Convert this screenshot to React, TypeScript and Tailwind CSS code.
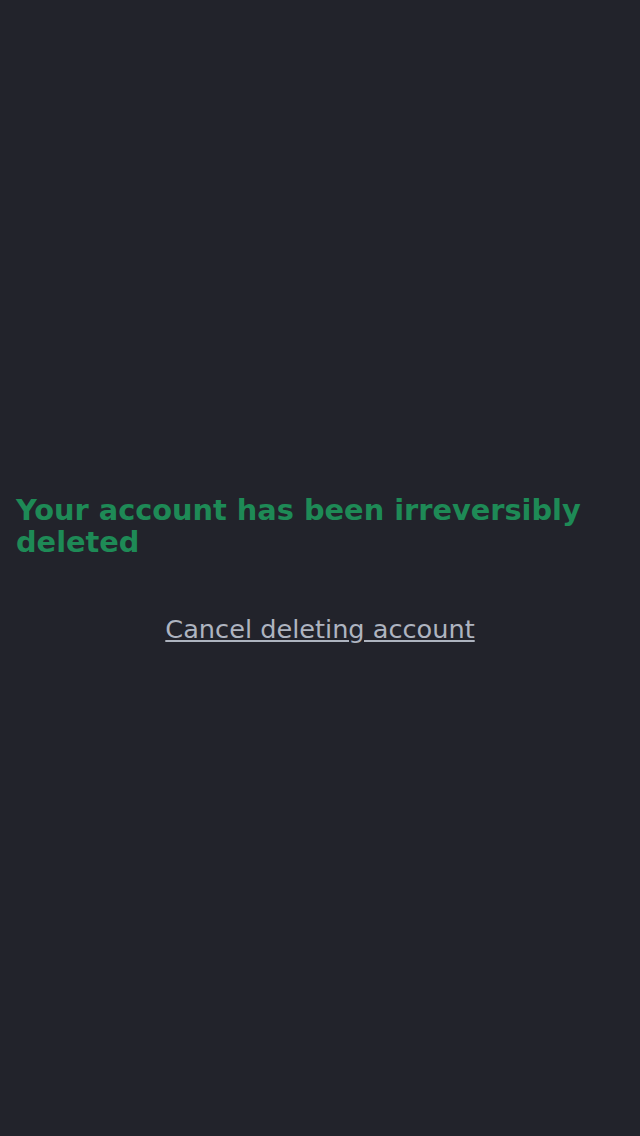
export default function App() {
  return (
    <div
      className="flex min-h-screen flex-col justify-center bg-[#22232b] px-4 pt-[7px]"
      style={{ fontFamily: '"DejaVu Sans", sans-serif' }}
    >
      <h1 className="text-[28.8px] font-bold leading-8 text-[#1e8a56]">
        Your account has been irreversibly deleted
      </h1>
      <div className="mt-[52px] text-center">
        <a href="#" className="text-[25.6px] text-[#aeb4c0] underline">
          Cancel deleting account
        </a>
      </div>
    </div>
  );
}
